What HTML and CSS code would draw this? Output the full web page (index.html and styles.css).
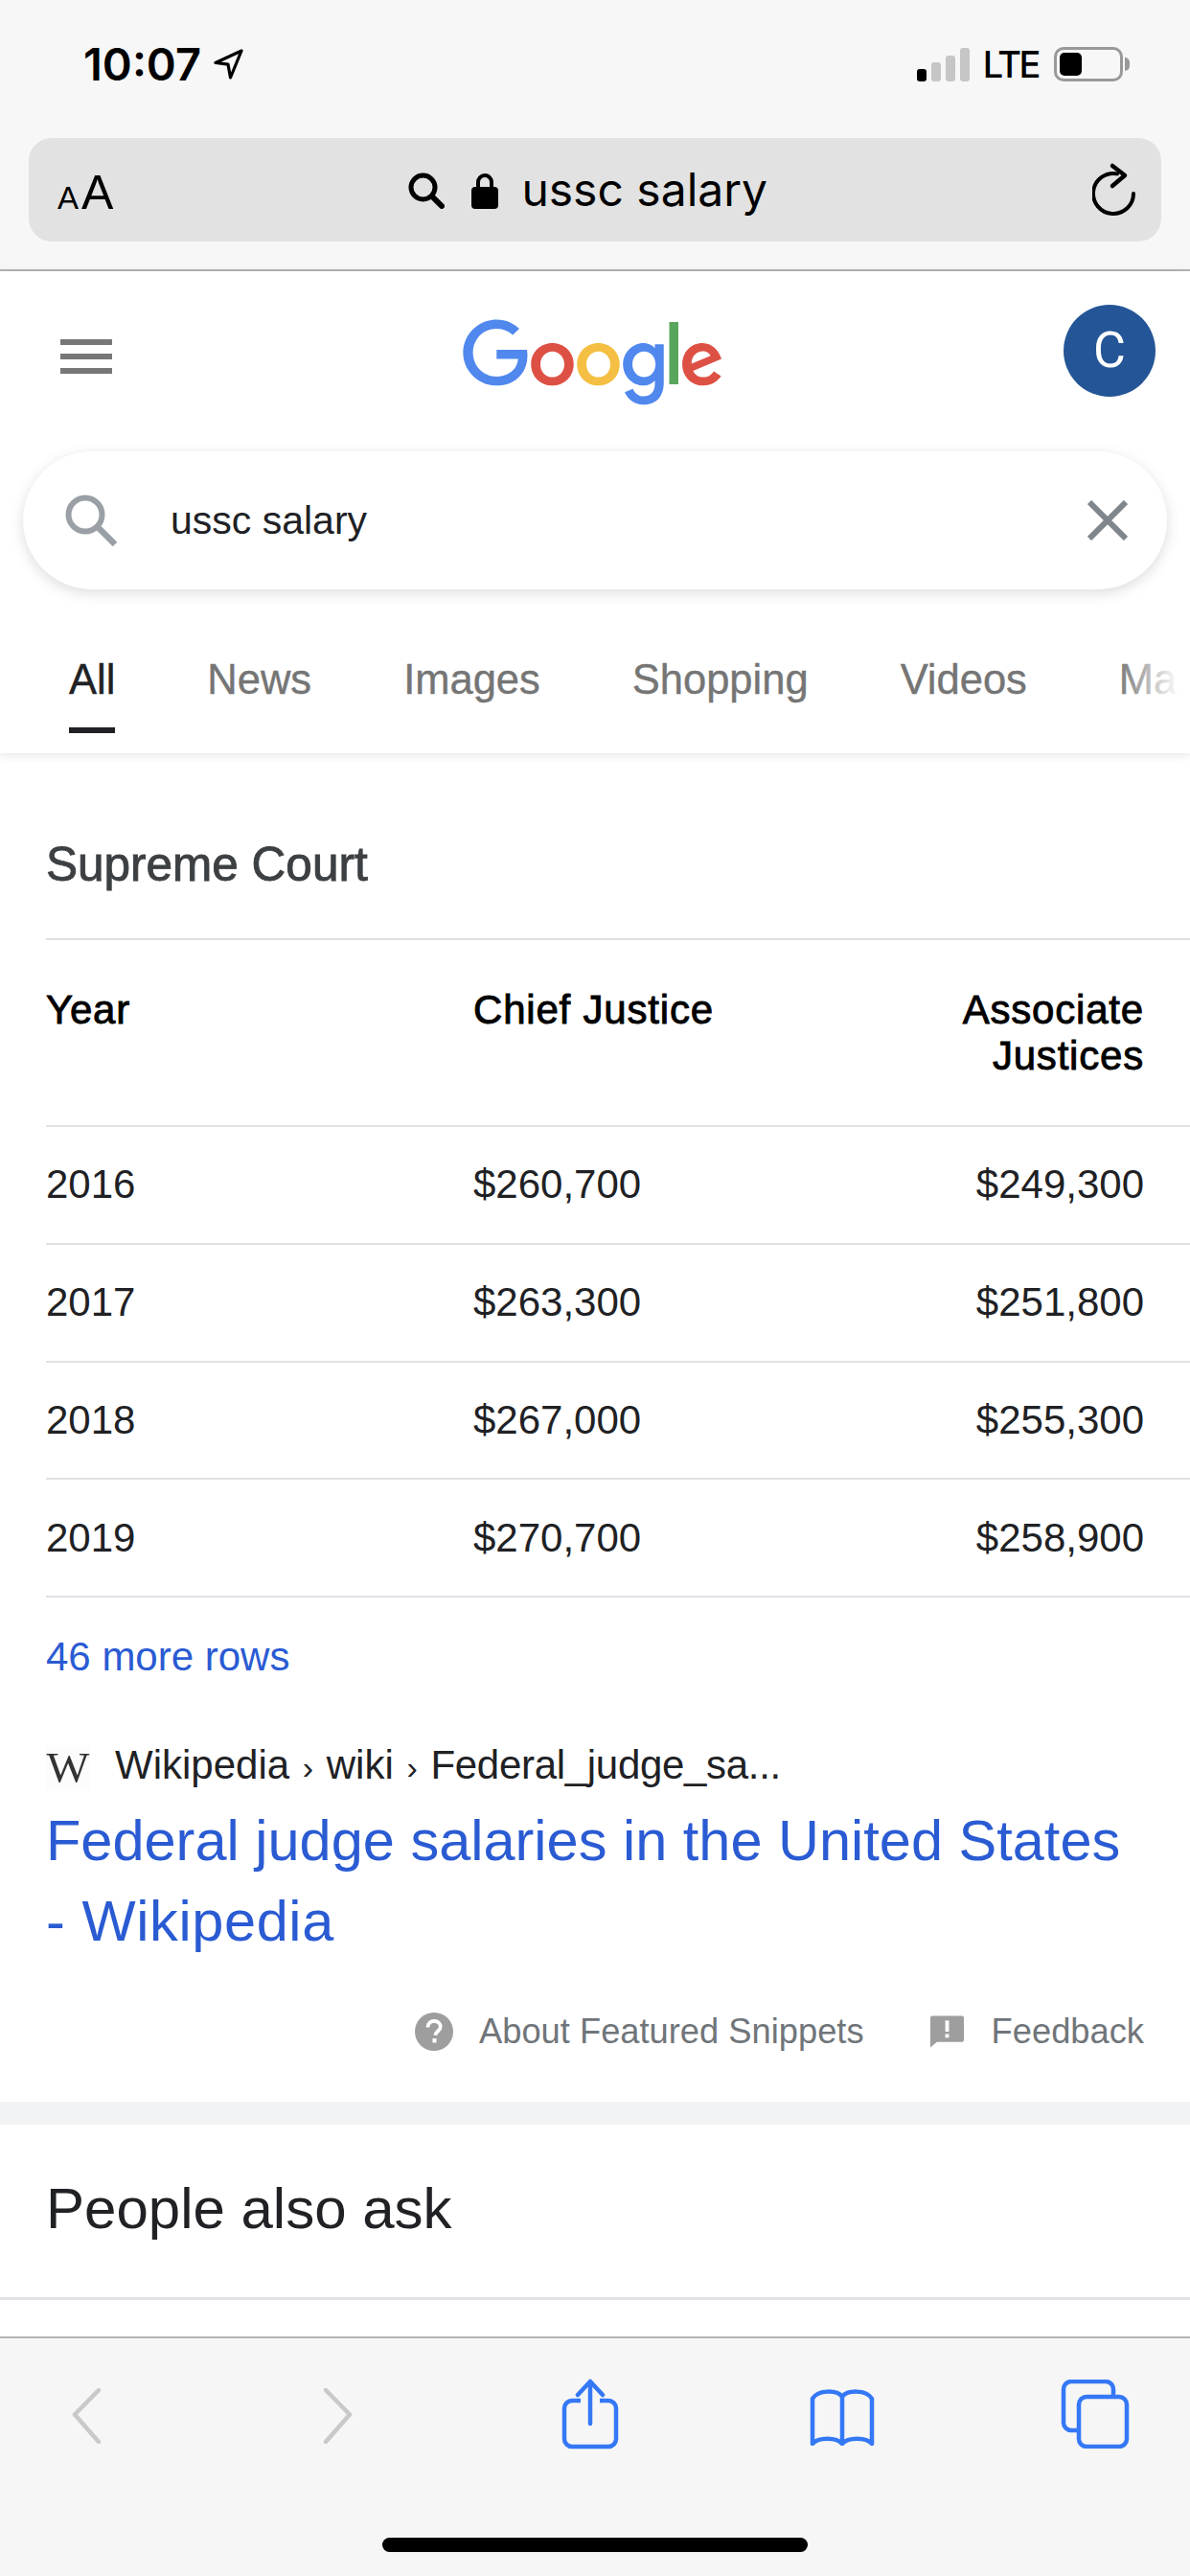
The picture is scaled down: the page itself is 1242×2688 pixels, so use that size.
FILE: index.html
```html
<!DOCTYPE html>
<html lang="en">
<head>
<meta charset="utf-8">
<title>ussc salary - Google Search</title>
<link rel="stylesheet" href="styles.css">
</head>
<body>
<div class="phone">
  <header class="chrome">
    <div class="status">
      <div class="status-left">
        <span class="time">10:07</span>
        <svg class="loc" width="32" height="32" viewBox="0 0 32 32"><path d="M30 2 3 14.500l13 1.600L18.500 30z" fill="none" stroke="#000" stroke-width="3.200" stroke-linejoin="round"/></svg>
      </div>
      <div class="status-right">
        <div class="signal"><i class="bar b1"></i><i class="bar b2"></i><i class="bar b3"></i><i class="bar b4"></i></div>
        <span class="lte">LTE</span>
        <div class="battery"><div class="battery-shell"><div class="battery-fill"></div></div><div class="battery-nub"></div></div>
      </div>
    </div>
    <div class="urlbar">
      <span class="aa"><span class="aa-small">A</span><span class="aa-big">A</span></span>
      <div class="url-center">
        <svg width="38" height="38" viewBox="0 0 38 38"><circle cx="15.500" cy="15.500" r="12.500" fill="none" stroke="#000" stroke-width="5"/><path d="M25 25l10 10" stroke="#000" stroke-width="6" stroke-linecap="round"/></svg>
        <svg class="lock" width="28" height="38" viewBox="0 0 28 38"><path d="M7 17V10a7 7 0 0 1 14 0v7" fill="none" stroke="#000" stroke-width="4"/><rect y="15" width="28" height="23" rx="4"/></svg>
        <span class="url-text">ussc salary</span>
      </div>
      <svg class="reload" width="48" height="56" viewBox="0 0 48 56"><path d="M26 12.400A21 21 0 1 0 43 33" fill="none" stroke="#000" stroke-width="4" stroke-linecap="round"/><path d="M21 4l13 10-13 11" fill="none" stroke="#000" stroke-width="4.500" stroke-linecap="round" stroke-linejoin="round"/></svg>
    </div>
  </header>

  <section class="gbar">
    <div class="gtop">
      <div class="burger"><i></i><i></i><i></i></div>
      <svg class="logo" width="272" height="92" viewBox="0 0 272 92">
        <path fill="#dd5144" d="M115.75 47.18c0 12.77-9.99 22.18-22.25 22.18s-22.25-9.41-22.25-22.18C71.25 34.32 81.24 25 93.5 25s22.25 9.32 22.25 22.18zm-9.74 0c0-7.98-5.79-13.44-12.51-13.44S80.99 39.2 80.99 47.18c0 7.9 5.79 13.44 12.51 13.44s12.51-5.55 12.51-13.44z"/>
        <path fill="#f4bf42" d="M163.75 47.18c0 12.77-9.99 22.18-22.25 22.18s-22.25-9.41-22.25-22.18c0-12.85 9.99-22.18 22.25-22.18s22.25 9.32 22.25 22.18zm-9.74 0c0-7.98-5.79-13.44-12.51-13.44s-12.51 5.46-12.51 13.44c0 7.9 5.79 13.44 12.51 13.44s12.51-5.55 12.51-13.44z"/>
        <path fill="#5088ee" d="M209.75 26.34v39.82c0 16.38-9.66 23.07-21.08 23.07-10.75 0-17.22-7.19-19.66-13.07l8.48-3.53c1.51 3.61 5.21 7.87 11.17 7.87 7.31 0 11.84-4.51 11.84-13v-3.19h-.34c-2.18 2.69-6.38 5.04-11.68 5.04-11.09 0-21.25-9.66-21.25-22.09 0-12.52 10.16-22.26 21.25-22.26 5.29 0 9.49 2.35 11.68 4.96h.34v-3.61h9.25zm-8.56 20.92c0-7.81-5.21-13.52-11.84-13.52-6.72 0-12.35 5.71-12.35 13.52 0 7.73 5.63 13.36 12.35 13.36 6.63 0 11.84-5.63 11.84-13.36z"/>
        <path fill="#58a65c" d="M225 3v65h-9.5V3h9.5z"/>
        <path fill="#dd5144" d="M262.02 54.48l7.56 5.04c-2.44 3.61-8.32 9.83-18.48 9.83-12.6 0-22.01-9.74-22.01-22.18 0-13.19 9.49-22.18 20.92-22.18 11.51 0 17.14 9.16 18.98 14.11l1.01 2.52-29.65 12.28c2.27 4.45 5.8 6.72 10.75 6.72 4.96 0 8.4-2.44 10.92-6.14zm-23.27-7.98l19.82-8.23c-1.09-2.77-4.37-4.7-8.23-4.7-4.95 0-11.84 4.37-11.59 12.93z"/>
        <path fill="#5088ee" d="M35.29 41.41V32H67c.31 1.64.47 3.58.47 5.68 0 7.06-1.93 15.79-8.15 22.01-6.05 6.3-13.78 9.66-24.02 9.66C16.32 69.35.36 53.89.36 34.91.36 15.93 16.32.47 35.3.47c10.5 0 17.98 4.12 23.6 9.49l-6.64 6.64c-4.03-3.78-9.49-6.72-16.97-6.72-13.86 0-24.7 11.17-24.7 25.03 0 13.86 10.84 25.03 24.7 25.03 8.99 0 14.11-3.61 17.39-6.89 2.66-2.66 4.41-6.46 5.1-11.65l-22.49.01z"/>
      </svg>
      <div class="avatar">C</div>
    </div>
    <div class="searchbox">
      <svg width="56" height="54" viewBox="0 0 56 54"><circle cx="21" cy="21" r="17.500" fill="none" stroke="#9aa0a6" stroke-width="6"/><path d="M33 33l19 19" stroke="#9aa0a6" stroke-width="6.500"/></svg>
      <span class="query">ussc salary</span>
      <svg class="clear" width="42" height="42" viewBox="0 0 42 42"><path d="M2 2l38 38M40 2L2 40" stroke="#80868b" stroke-width="6"/></svg>
    </div>
    <nav class="tabs">
      <span class="tab active">All</span>
      <span class="tab">News</span>
      <span class="tab">Images</span>
      <span class="tab">Shopping</span>
      <span class="tab">Videos</span>
      <span class="tab">Maps</span>
    </nav>
  </section>

  <main class="snippet">
    <h2 class="snip-title">Supreme Court</h2>
    <div class="table">
      <div class="row head"><span class="c1">Year</span><span class="c2">Chief Justice</span><span class="c3">Associate Justices</span></div>
      <div class="row"><span class="c1">2016</span><span class="c2">$260,700</span><span class="c3">$249,300</span></div>
      <div class="row"><span class="c1">2017</span><span class="c2">$263,300</span><span class="c3">$251,800</span></div>
      <div class="row"><span class="c1">2018</span><span class="c2">$267,000</span><span class="c3">$255,300</span></div>
      <div class="row"><span class="c1">2019</span><span class="c2">$270,700</span><span class="c3">$258,900</span></div>
    </div>
    <a class="more">46 more rows</a>
    <div class="crumbs">
      <span class="wiki-box"><span class="wiki-w">W</span></span>
      <span class="crumb-text">Wikipedia <span class="sep">›</span> wiki <span class="sep">›</span> <span class="crumb-tail">Federal_judge_sa...</span></span>
    </div>
    <a class="result-title">Federal judge salaries in the United States <span class="title-tail">- Wikipedia</span></a>
    <div class="feedback">
      <svg width="40" height="40" viewBox="0 0 40 40"><circle cx="20" cy="20" r="20" fill="#9e9e9e"/><path d="M13.500 15.500c0-4 3-6.500 6.700-6.500 3.800 0 6.500 2.300 6.500 5.700 0 4.800-5.200 4.700-5.200 9" fill="none" stroke="#fff" stroke-width="3.800"/><rect x="18.500" y="27" width="4" height="4.500" fill="#fff"/></svg>
      <span class="fb-about">About Featured Snippets</span>
      <svg class="fb-icon" width="35" height="34" viewBox="0 0 36 34"><path d="M2 0h32a2 2 0 0 1 2 2v24a2 2 0 0 1-2 2H7l-7 6V2a2 2 0 0 1 2-2z" fill="#9e9e9e"/><rect x="16" y="5" width="4" height="12" fill="#fff"/><rect x="16" y="19.500" width="4" height="4" fill="#fff"/></svg>
      <span class="fb-text">Feedback</span>
    </div>
  </main>
  <div class="band"></div>
  <section class="paa"><h2 class="paa-title">People also ask</h2></section>
  <div class="paa-gap"></div>

  <footer class="toolbar">
    <div class="tools">
      <svg class="t-back" width="33" height="58" viewBox="0 0 33 58"><path d="M29 2 4 27.500 29 56" fill="none" stroke="#c9c9c9" stroke-width="4.500" stroke-linecap="round" stroke-linejoin="round"/></svg>
      <svg class="t-fwd" width="33" height="58" viewBox="0 0 33 58"><path d="M4 2l25 25.500L4 56" fill="none" stroke="#c9c9c9" stroke-width="4.500" stroke-linecap="round" stroke-linejoin="round"/></svg>
      <svg class="t-share" width="60" height="74" viewBox="0 0 60 74"><path d="M20 23H11a8 8 0 0 0-8 8v32a8 8 0 0 0 8 8h38a8 8 0 0 0 8-8V31a8 8 0 0 0-8-8h-9" fill="none" stroke="#3478f6" stroke-width="4.500"/><path d="M30 3v44M17 17 30 3l13 14" fill="none" stroke="#3478f6" stroke-width="4.500" stroke-linecap="round" stroke-linejoin="round"/></svg>
      <svg class="t-book" width="68" height="60" viewBox="0 0 68 60"><path d="M34 9c-5-7-25-8-31 2v47c6-7 25-7 31 0 6-7 25-7 31 0V11C59 1 39 2 34 9zM34 9v49" fill="none" stroke="#3478f6" stroke-width="4.500" stroke-linejoin="round"/></svg>
      <svg class="t-tabs" width="72" height="72" viewBox="0 0 72 72"><path d="M17 53h-6a8 8 0 0 1-8-8V10a8 8 0 0 1 8-8h36a8 8 0 0 1 8 8v8" fill="none" stroke="#3478f6" stroke-width="4.500"/><rect x="19" y="18" width="50" height="52" rx="8" fill="none" stroke="#3478f6" stroke-width="4.500"/></svg>
    </div>
    <div class="home"></div>
  </footer>
</div>
</body>
</html>
```
FILE: styles.css
```css
* { box-sizing: border-box; }
html, body { margin: 0; padding: 0; background: #fff; }
.phone { width: 1242px; height: 2688px; overflow: hidden; display: flex; flex-direction: column; font-family: "Liberation Sans", Arial, sans-serif; color: #202124; }

/* Safari chrome */
.chrome { height: 283px; background: #f7f7f7; border-bottom: 2px solid #b4b4b4; padding-top: 44px; flex: none; }
.status { height: 46px; display: flex; justify-content: space-between; align-items: center; padding: 0 63px 0 87px; }
.status-left { display: flex; align-items: center; gap: 12px; }
.time { font-family: Inter, sans-serif; font-weight: 600; font-size: 47px; line-height: 46px; color: #000; }
.status-right { display: flex; align-items: center; }
.signal { display: flex; align-items: flex-end; gap: 5px; height: 35px; }
.bar { display: block; width: 10px; background: #c6c6c6; border-radius: 3px; }
.b1 { height: 13px; background: #000; }
.b2 { height: 20px; }
.b3 { height: 27px; }
.b4 { height: 35px; }
.lte { font-family: Inter, sans-serif; font-weight: 500; font-size: 38px; line-height: 38px; letter-spacing: -2.500px; margin-left: 14px; color: #000; }
.battery { display: flex; align-items: center; margin-left: 16px; }
.battery-shell { width: 72px; height: 36px; border: 3px solid #999; border-radius: 10px; padding: 3px; }
.battery-fill { width: 23px; height: 100%; background: #000; border-radius: 5px; }
.battery-nub { width: 5px; height: 14px; background: #999; margin-left: 2px; border-radius: 0 7px 7px 0; }

.urlbar { margin: 54px 30px 0; height: 108px; background: #e2e2e2; border-radius: 24px; display: flex; align-items: center; justify-content: space-between; padding: 0 24px 0 30px; }
.aa { display: flex; align-items: baseline; color: #000; line-height: 1; padding-top: 6px; }
.aa-small { font-size: 33px; }
.aa-big { font-size: 50px; margin-left: 3px; }
.url-center { display: flex; align-items: center; margin-left: 308px; margin-right: auto; padding-top: 2px; }
.lock { margin-left: 28px; }
.url-text { font-family: Inter, sans-serif; font-size: 48px; line-height: 60px; margin-left: 24px; color: #000; padding-bottom: 2px; }
.reload { margin-bottom: 2px; }

/* Google header */
.gbar { height: 503px; flex: none; background: #fff; box-shadow: 0 2px 8px rgba(60,64,67,.14); position: relative; z-index: 1; padding-top: 35px; }
.gtop { display: flex; align-items: center; padding: 0 36px 0 63px; height: 96px; }
.burger { width: 54px; display: flex; flex-direction: column; gap: 9px; margin-top: 12px; }
.burger i { display: block; height: 6px; background: #777; }
.logo { margin: 25px 0 0 366px; display: block; flex: none; }
.avatar { margin-left: auto; width: 96px; height: 96px; border-radius: 50%; background: #245596; color: #fff; font-family: Roboto, sans-serif; font-size: 52px; line-height: 96px; text-align: center; }
.searchbox { margin: 57px 24px 0; height: 144px; border-radius: 72px; background: #fff; box-shadow: 0 4px 14px rgba(60,64,67,.18); display: flex; align-items: center; padding: 0 41px 0 44px; }
.query { font-size: 41px; margin-left: 54px; color: #202124; }
.clear { margin-left: auto; }
.tabs { display: flex; height: 171px; padding: 70px 0 0 72px; overflow: hidden; white-space: nowrap; gap: 96px; position: relative; }
.tabs::after { content: ""; position: absolute; top: 0; right: 0; bottom: 0; width: 76px; background: linear-gradient(to right, rgba(255,255,255,0), #fff 85%); }
.tab { font-size: 43.500px; line-height: 48px; color: #757575; height: 80px; flex: none; -webkit-text-stroke: .4px currentColor; }
.tab.active { color: #202124; border-bottom: 6px solid #202124; }

/* Snippet */
.snippet { height: 1407px; flex: none; padding: 0 0 0 48px; background: #fff; }
.snip-title { margin: 0; padding-top: 88px; height: 193px; font-size: 49.500px; line-height: 56px; font-weight: 400; -webkit-text-stroke: .9px #3c4043; color: #3c4043; }
.table { border-top: 2px solid #dfe1e5; }
.row { display: grid; grid-template-columns: 446px 1fr 300px; padding-right: 48px; align-items: center; height: 122.800px; border-bottom: 2px solid #dfe1e5; font-size: 42px; line-height: 48px; color: #202124; }
.row.head { height: 195px; align-items: start; padding-top: 49px; color: #000; letter-spacing: .800px; -webkit-text-stroke: .9px #000; }
.c3 { text-align: right; }
.more { display: block; margin-top: 38px; font-size: 42px; line-height: 48px; color: #2a5bd3; }
.crumbs { display: flex; align-items: center; margin-top: 66px; height: 48px; }
.wiki-box { width: 46px; height: 48px; display: block; overflow: hidden; background: #fcfcfc; margin-top: 4px; text-align: center; }
.wiki-w { display: block; font-family: "Liberation Serif", serif; font-size: 44px; line-height: 48px; color: #333; transform: scaleX(1.080); filter: blur(.7px); }
.crumb-text { margin-left: 26px; font-size: 42px; line-height: 48px; }
.sep { font-size: 34px; margin: 0 2px; }
.crumb-tail { letter-spacing: -.300px; }
.result-title { display: block; width: 1146px; margin-top: 12px; font-size: 59.500px; line-height: 84px; color: #2a5bd3; }
.title-tail { letter-spacing: .600px; }
.feedback { display: flex; align-items: center; justify-content: flex-end; padding-right: 48px; margin-top: 53px; height: 40px; color: #70757a; font-size: 36.300px; }
.fb-about { margin-left: 27px; }
.fb-icon { margin-left: 69px; }
.fb-text { margin-left: 29px; }
.band { height: 24px; background: #f1f3f4; flex: none; }
.paa { height: 183px; flex: none; padding-left: 48px; border-bottom: 3px solid #dfe1e5; }
.paa-title { margin: 0; padding-top: 53px; font-weight: 400; font-size: 60px; line-height: 70px; color: #202124; }
.paa-gap { height: 38px; flex: none; background: #fff; }

/* Toolbar */
.toolbar { flex: 1; background: #f6f6f6; border-top: 2px solid #b4b4b4; display: flex; flex-direction: column; }
.tools { display: flex; align-items: flex-start; height: 208px; padding-left: 74px; }
.t-back { margin-top: 52px; }
.t-fwd { margin: 52px 0 0 229px; }
.t-share { margin: 42px 0 0 217px; }
.t-book { margin: 52px 0 0 199px; }
.t-tabs { margin: 43px 0 0 194px; }
.home { width: 444px; height: 15px; border-radius: 8px; background: #000; margin-left: 399px; }
```
